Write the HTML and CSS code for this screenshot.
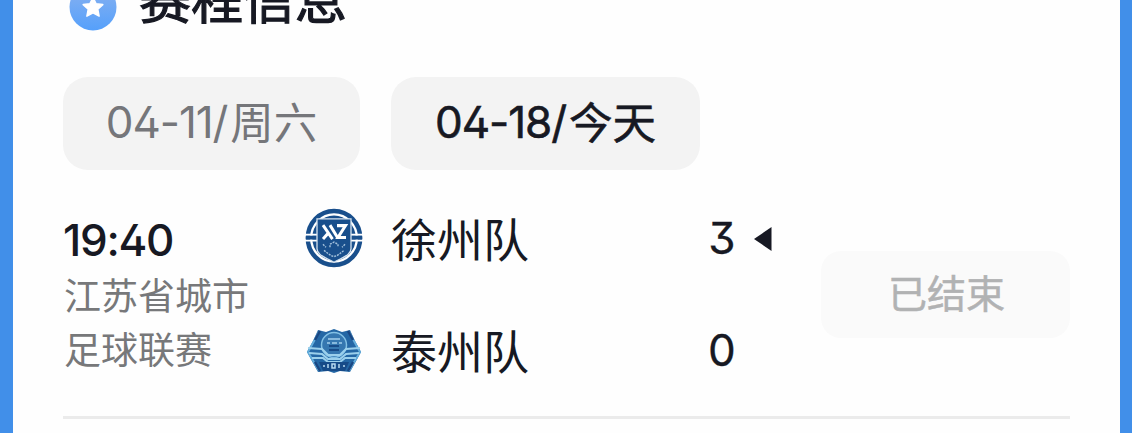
FILE: index.html
```html
<!DOCTYPE html>
<html lang="zh-CN">
<head>
<meta charset="utf-8">
<title>赛程信息</title>
<link rel="stylesheet" href="styles.css">
</head>
<body>
<main class="card">
  <header class="heading">
    <svg class="heading-icon" viewBox="0 0 48 48">
      <defs><linearGradient id="badge" x1="0" y1="0" x2="0" y2="1"><stop offset=".35" stop-color="#79acf3"/><stop offset="1" stop-color="#55a0fb"/></linearGradient></defs>
      <circle cx="24" cy="24" r="23.5" fill="url(#badge)"/>
      <path d="M24 14.5l3 6.2 6.8.9-5 4.7 1.3 6.8-6.1-3.3-6.1 3.3 1.3-6.8-5-4.7 6.8-.9z" fill="#fff" stroke="#fff" stroke-width="1.5" stroke-linejoin="round"/>
    </svg>
    <h1 class="title">赛程信息</h1>
  </header>
  <nav class="tabs">
    <a class="tab tab-past"><span class="date">04-11/</span><span class="day">周六</span></a>
    <a class="tab tab-today"><span class="date">04-18/</span><span class="day">今天</span></a>
  </nav>
  <section class="match">
    <div class="info">
      <div class="time">19:40</div>
      <div class="league">江苏省城市<br>足球联赛</div>
    </div>
    <div class="teams">
      <div class="team">
        <svg class="crest crest-xuzhou" viewBox="0 0 60 60" preserveAspectRatio="none">
          <circle cx="30" cy="30" r="26.2" fill="#fff" stroke="#194f8c" stroke-width="4.400"/>
          <circle cx="30" cy="30" r="19" fill="none" stroke="#194f8c" stroke-width="5.500"/>
          <path d="M1 26.800h58M1 32.400h58" stroke="#fff" stroke-width="2"/>
          <path d="M2 29.6h12M46 29.6h12" stroke="#194f8c" stroke-width="3.600"/>
          <path d="M13 11.500h34v29c0 6-8 8-17 13-9-5-17-7-17-13z" fill="#194f8c" stroke="#d6e3ef" stroke-width="1.300"/>
          <path d="M17.500 15.500h9l3 5 1-5h12.500v4l-6 8h6v4H31l-3-5-3 5h-7.500l5.500-8z" fill="none"/>
          <path d="M19 17.500l9.500 13.500M26 17.500l7.500 12M24.500 25l-5.500 6" fill="none" stroke="#fff" stroke-width="3"/>
          <path d="M33 18h8.500l-7.500 11.500h8" fill="none" stroke="#fff" stroke-width="3"/>
          <path d="M19 36l3 3M41 36l-3 3M26 39v-3l4-2 4 2v3M20 42l4 3 3 2 3 1 3-1 3-2 4-3" fill="none" stroke="#a5c2dc" stroke-width="1.400" stroke-dasharray="2 1"/>
        </svg>
        <span class="name">徐州队</span>
        <span class="score">3</span>
        <svg class="winner" viewBox="0 0 18 24"><path d="M0 12L17.500 0v24z"/></svg>
      </div>
      <div class="team">
        <svg class="crest crest-taizhou" viewBox="0 0 60 60">
          <path d="M14 8l8 2 8-3 8 3 8-2 5 11 6 11-6 11-5 9-10-1-6 2-6-2-10 1-5-9-6-11 6-11z" fill="#2467a5"/>
          <path d="M15 10L4 30l11 19M45 10l11 20-11 19" fill="none" stroke="#63addb" stroke-width="2"/>
          <path d="M16 9l-5 9M44 9l5 9M16 49l-5-9M44 49l5-9" stroke="#1a4783" stroke-width="2.500"/>
          <circle cx="30" cy="23" r="12.500" fill="#3577b0" stroke="#83c1e5" stroke-width="1.500"/>
          <path d="M4 26l14 1 6 6h12l6-6 14-1M5 31l13 1 6 5h12l6-5 13-1M8 36h11l5 4h12l5-4h11" fill="none" stroke="#9bd0ec" stroke-width="2.200"/>
          <path d="M24 17h12M23 21h3M28 21h5M35 21h3" fill="none" stroke="#a3d0ec" stroke-width="1.500"/>
          <path d="M25 24h10M25 28h10" stroke="#174b88" stroke-width="2"/>
          <path d="M15 40h30l-4 9H19z" fill="#174b88"/>
          <path d="M19 44h2M24 42v4M28 42h3v4h-3zM35 42v4M39 44h2" fill="none" stroke="#b8daf0" stroke-width="1.500"/>
        </svg>
        <span class="name">泰州队</span>
        <span class="score">0</span>
      </div>
    </div>
    <div class="status">已结束</div>
  </section>
</main>
</body>
</html>
```
FILE: styles.css
```css
* { box-sizing: border-box; }
body {
  margin: 0;
  height: 433px;
  overflow: hidden;
  background: #418fe9;
  font-family: Inter, "Noto Sans CJK SC", sans-serif;
  font-feature-settings: "cv02", "cv09", "calt" 0;
  color: #171923;
}
.card {
  display: flow-root;
  height: 433px;
  margin: 0 12px 0 13px;
  padding: 0 50px;
  background: #fefefe;
}
.heading {
  display: flex;
  align-items: center;
  gap: 22px;
  height: 60px;
  margin-top: -23px;
  padding-left: 6px;
}
.heading-icon { width: 48px; height: 48px; }
.title {
  margin: 0 0 12px;
  font-size: 52px;
  line-height: 60px;
  font-weight: 400;
  -webkit-text-stroke: 1.2px;
}
.tabs { display: flex; gap: 31px; margin-top: 40px; }
.tab {
  display: flex;
  align-items: center;
  justify-content: center;
  height: 93px;
  padding-bottom: 4px;
  border-radius: 25px;
  background: #f3f3f3;
  font-size: 44px;
  line-height: 60px;
}
.date { letter-spacing: -1.1px; }
.day { margin: 2px 0 0 3px; font-size: 43.5px; }
.tab-past { width: 297px; color: #75767a; }
.tab-today { width: 309px; -webkit-text-stroke: .6px; }
.match {
  display: flex;
  height: 249px;
  border-bottom: 3px solid #ebebeb;
}
.info { width: 241px; padding-top: 42px; }
.time { font-size: 44px; line-height: 56px; font-weight: 500; letter-spacing: -1.3px; }
.league { padding: 2px 0 0 1px; font-size: 37px; line-height: 54px; color: #77787a; }
.teams { width: 517px; padding-top: 33px; }
.team { display: flex; align-items: center; height: 70px; margin-bottom: 42px; }
.crest { width: 60px; height: 60px; }
.crest-xuzhou { height: 62px; }
.crest-taizhou { margin-top: 3px; }
.name { width: 316px; margin: 3px 0 0 27px; font-size: 46px; line-height: 70px; }
.score {
  width: 30px;
  font-size: 44px;
  font-weight: 400;
  -webkit-text-stroke: .3px;
  text-align: center;
}
.winner { width: 18px; height: 24px; margin: 2px 0 0 17px; fill: #171923; }
.status {
  width: 249px;
  height: 87px;
  margin-top: 81px;
  padding-left: 2px;
  border-radius: 20px;
  background: #fafafa;
  color: #b1b2b3;
  font-size: 39px;
  line-height: 86px;
  -webkit-text-stroke: .5px;
  text-align: center;
}
```
